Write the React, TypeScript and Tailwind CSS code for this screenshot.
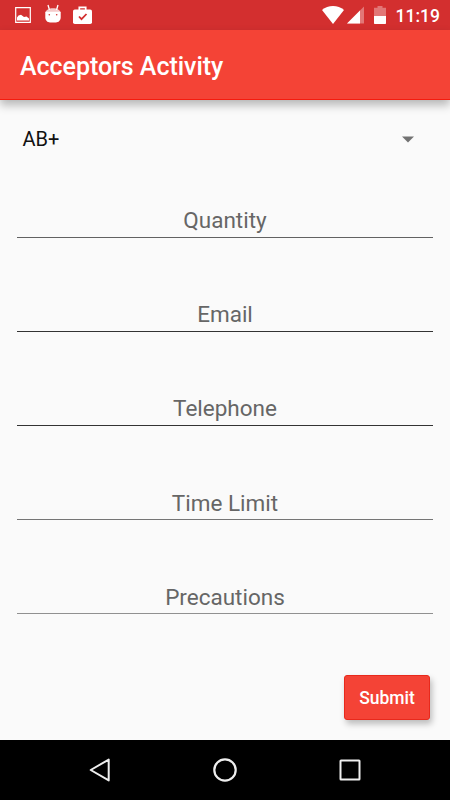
// types
type FieldProp = {
    mode: "numeric" | "email" | "tel" | "text",
    label: string,
    line: string,
};

const fields: FieldProp[] = [
    { mode: "numeric", label: "Quantity", line: "border-[#626262] pb-[3px]" },
    { mode: "email", label: "Email", line: "border-[#333333] pb-[3px]" },
    { mode: "tel", label: "Telephone", line: "border-[#333333] pb-[3px]" },
    { mode: "text", label: "Time Limit", line: "border-[#757575] pb-[2px]" },
    { mode: "text", label: "Precautions", line: "border-[#909090] pb-[2px]" },
];

function StatusBar(){
    return(
        <div className="flex h-[30px] shrink-0 items-center justify-between bg-[#d32f2f] pl-[15px] pr-[10px] text-white">
            <div className="flex items-center">
                <svg width="16" height="16" viewBox="0 0 16 16">
                    <path d="M.7.7h14.600v14.600H.7z" fill="none" stroke="currentColor" strokeWidth="1.200" />
                    <path d="M2 13.500V10.500l1.500-2 2.500-.8 3 2.300 2.500-.5L14 11.500v2z" fill="currentColor" />
                </svg>
                <svg className="-mt-0.5 ml-[14px]" width="16" height="20" viewBox="0 0 16 20">
                    <path d="M3 1l1.500 5M13 1l-1.500 5" stroke="currentColor" strokeWidth="1.300" />
                    <path d="M.5 8.500C1 6 4 4.200 8 4.200s7 1.800 7.500 4.300z" fill="currentColor" opacity=".75" />
                    <path d="M.3 7.800h15.400v5.700c0 3-2.200 4.900-4.700 4.900H5c-2.500 0-4.700-1.900-4.700-4.900z" fill="currentColor" />
                    <circle cx="4.300" cy="10.700" r=".8" fill="#d32f2f" />
                    <circle cx="11.700" cy="10.700" r=".8" fill="#d32f2f" />
                </svg>
                <svg className="-mt-px ml-3" width="19" height="18" viewBox="0 0 19 18">
                    <path d="M6.300 4V1.300h6.400V4" fill="none" stroke="currentColor" strokeWidth="1.700" />
                    <rect y="3.500" width="19" height="14.500" rx="1.800" fill="currentColor" />
                    <path d="M6 10.500l2.500 2.700 5-5.200" fill="none" stroke="#d32f2f" strokeWidth="1.800" />
                </svg>
            </div>
            <div className="flex items-center">
                <svg width="22" height="18" viewBox="0 0 22 18">
                    <path d="M0 4C6-1.300 16-1.300 22 4L11 18z" fill="currentColor" />
                </svg>
                <svg className="ml-[3px]" width="17" height="18" viewBox="0 0 17 18">
                    <path d="M0 17.500L17 .5v17z" fill="currentColor" opacity=".35" />
                    <path d="M0 17.500L13 4.500v13z" fill="currentColor" />
                </svg>
                <svg className="ml-[10px]" width="12" height="18" viewBox="0 0 12 18">
                    <path d="M0 1.800h3.500V0h5v1.800H12V10H0z" fill="currentColor" opacity=".35" />
                    <path d="M0 10h12v7.300q0 .7-.7.700H.7Q0 18 0 17.300z" fill="currentColor" />
                </svg>
                <time className="ml-[10px] pt-0.5 text-[17.5px] leading-5 font-medium">11:19</time>
            </div>
        </div>
    );
}

function NavigationBar(){
    return(
        <nav className="flex h-[60px] shrink-0 items-center justify-between bg-black px-[88px] text-[#eeeeee]">
            <svg width="24" height="24" viewBox="0 0 24 24" fill="none" stroke="currentColor" strokeWidth="2">
                <path d="M20.700 1.600v20.800L2.700 12z" strokeLinejoin="round" />
            </svg>
            <svg width="24" height="24" viewBox="0 0 24 24" fill="none" stroke="currentColor" strokeWidth="2.200">
                <circle cx="12" cy="12" r="10.700" />
            </svg>
            <svg width="24" height="24" viewBox="0 0 24 24" fill="none" stroke="currentColor" strokeWidth="2">
                <rect x="2.500" y="2.500" width="19" height="19" rx=".5" />
            </svg>
        </nav>
    );
}

function App(){
    return(
        <div className="flex h-[800px] w-[450px] flex-col overflow-hidden bg-[#fafafa] font-['Roboto',sans-serif]">
            <StatusBar />

            <header className="flex h-[70px] shrink-0 items-center border-b border-[#f51b0e] bg-[#f44336] pl-5 pt-[5px] shadow-[0_5px_9px_rgba(0,0,0,0.28)]">
                <h1 className="text-[25px] leading-[30px] font-medium tracking-[-0.04px] text-white">Acceptors Activity</h1>
            </header>

            <main className="flex grow flex-col px-[17px]">
                <div className="mt-[25px] flex h-[19px] shrink-0 items-center justify-between pl-[5.5px] pr-[19.5px] pt-[9px]">
                    <span className="text-[20px] leading-6 text-[#111111]">AB+</span>
                    <svg width="12" height="7" viewBox="0 0 12 7">
                        <path d="M0 .5h12l-6 6z" fill="#727272" />
                    </svg>
                </div>

                {fields.map((field) => {
                    return <label key={field.label} className={`${field.line} flex h-[94px] shrink-0 items-end border-b`}>
                        <input type="text" inputMode={field.mode} placeholder={field.label} className="h-[27px] w-full text-center text-[22.5px] outline-none placeholder:text-[#666666]" />
                    </label>
                })}

                <button className="mt-[61px] mr-[3px] h-[45px] w-[86px] shrink-0 self-end rounded-[3px] border border-[#e8291c] bg-[#f44336] pt-0.5 text-[17.5px] font-medium text-white shadow-[2px_4px_6px_rgba(0,0,0,0.25)]">Submit</button>
            </main>

            <NavigationBar />
        </div>
    );
}

export default App;
